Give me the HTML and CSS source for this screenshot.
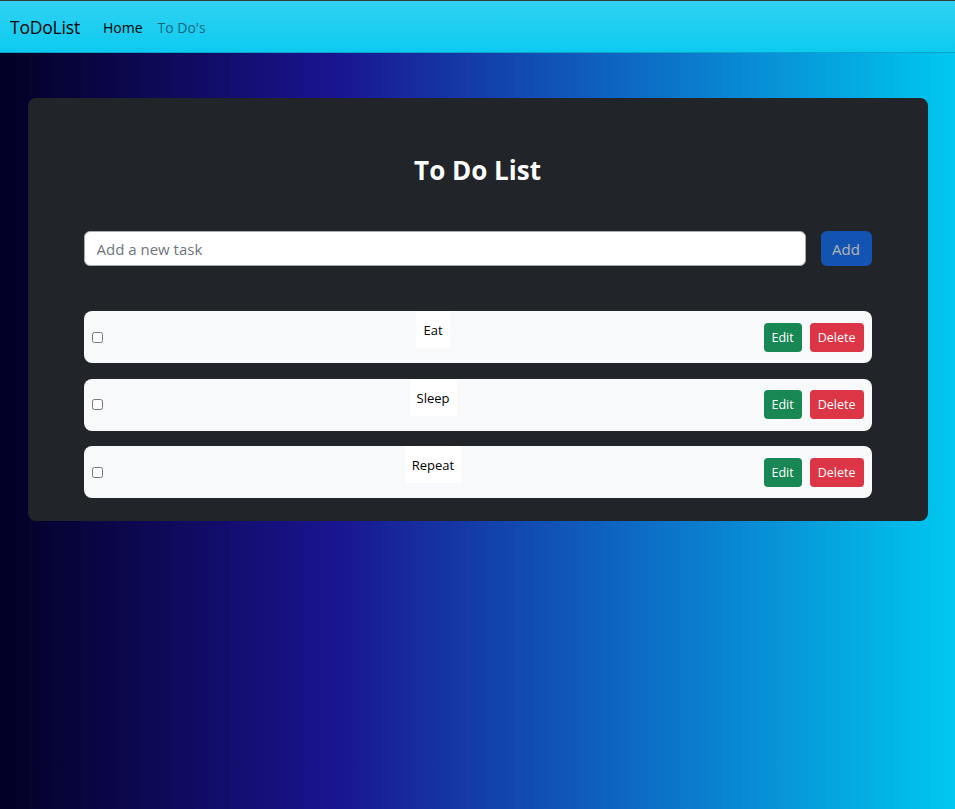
FILE: index.html
```html
<!DOCTYPE html>
<html lang="en">
<head>
<meta charset="utf-8">
<title>ToDoList</title>
<link rel="stylesheet" href="styles.css">
</head>
<body>
<nav class="navbar">
  <a class="brand" href="#">ToDoList</a>
  <ul class="nav-links">
    <li><a class="nav-link active" href="#">Home</a></li>
    <li><a class="nav-link" href="#">To Do's</a></li>
  </ul>
</nav>
<main class="page">
  <section class="card">
    <h1 class="title">To Do List</h1>
    <form class="add-row">
      <input class="task-input" type="text" placeholder="Add a new task">
      <button class="btn btn-add" type="button">Add</button>
    </form>
    <ul class="todo-list">
      <li class="todo-item">
        <input class="todo-check" type="checkbox">
        <div class="todo-text-wrap"><span class="todo-text">Eat</span></div>
        <div class="todo-actions">
          <button class="btn btn-sm btn-edit" type="button">Edit</button>
          <button class="btn btn-sm btn-delete" type="button">Delete</button>
        </div>
      </li>
      <li class="todo-item">
        <input class="todo-check" type="checkbox">
        <div class="todo-text-wrap"><span class="todo-text">Sleep</span></div>
        <div class="todo-actions">
          <button class="btn btn-sm btn-edit" type="button">Edit</button>
          <button class="btn btn-sm btn-delete" type="button">Delete</button>
        </div>
      </li>
      <li class="todo-item">
        <input class="todo-check" type="checkbox">
        <div class="todo-text-wrap"><span class="todo-text">Repeat</span></div>
        <div class="todo-actions">
          <button class="btn btn-sm btn-edit" type="button">Edit</button>
          <button class="btn btn-sm btn-delete" type="button">Delete</button>
        </div>
      </li>
    </ul>
  </section>
</main>
</body>
</html>
```
FILE: styles.css
```css
* { box-sizing: border-box; }
html, body { height: 100%; }
body {
  margin: 0;
  font-family: "Open Sans", "Noto Sans", sans-serif;
  color: #212529;
  background: linear-gradient(to right, #020024 0%, #1a1490 35%, #0e66c2 65%, #00c8f0 100%);
  min-height: 809px;
}
.navbar {
  display: flex;
  align-items: center;
  height: 53px;
  border-top: 1px solid #343a40;
  border-bottom: 1px solid #0ba4c6;
  background: #0dcaf0 linear-gradient(180deg, rgba(255,255,255,.15), rgba(255,255,255,0));
  padding: 0 10px;
}
.brand {
  font-size: 17.5px;
  color: #000;
  text-decoration: none;
  margin-right: 23px;
  letter-spacing: -0.2px;
}
.nav-links {
  display: flex;
  list-style: none;
  margin: 0;
  padding: 0;
  gap: 15px;
}
.nav-link {
  font-size: 14px;
  color: rgba(0,0,0,.55);
  text-decoration: none;
}
.nav-link.active { color: #000; }
.page {
  padding-top: 45px;
}
.card {
  width: 900px;
  margin: 0 auto;
  background: #212529;
  border-radius: 8px;
  padding: 54px 56px 23px;
}
.title {
  margin: 0 0 43px;
  text-align: center;
  color: #fff;
  font-size: 26px;
  font-weight: 700;
  line-height: 36px;
}
.add-row {
  display: flex;
  gap: 15px;
  margin: 0 0 45px;
}
.task-input {
  flex: 1;
  height: 35px;
  border: 1px solid #a6a9ad;
  border-radius: 6px;
  padding: 0 12px;
  font-family: inherit;
  font-size: 15px;
  color: #212529;
  background: #fff;
}
.task-input::placeholder { color: #6c757d; }
.btn {
  font-family: inherit;
  border: 1px solid transparent;
  cursor: pointer;
}
.btn-add {
  width: 51px;
  height: 35px;
  border-radius: 6px;
  background: #0d6efd;
  color: #fff;
  font-size: 15px;
  opacity: .65;
}
.todo-list {
  list-style: none;
  margin: 0;
  padding: 0;
  display: flex;
  flex-direction: column;
  gap: 15.5px;
}
.todo-item {
  display: flex;
  align-items: center;
  height: 52px;
  padding: 0 8px;
  background: #f8f9fa;
  border-radius: 8px;
}
.todo-check {
  width: 11px;
  height: 11px;
  margin: 0;
}
.todo-text-wrap {
  flex: 1;
  align-self: flex-start;
  text-align: center;
}
.todo-text {
  display: inline-block;
  background: #fff;
  padding: 9px 7px 7px;
  font-size: 13px;
  line-height: 21px;
  color: #000;
}
.todo-actions {
  display: flex;
  gap: 8px;
}
.btn-sm {
  height: 29px;
  padding: 0 7px;
  border-radius: 4px;
  font-size: 12.5px;
  color: #fff;
}
.btn-edit { background: #198754; }
.btn-delete { background: #dc3545; }
```
